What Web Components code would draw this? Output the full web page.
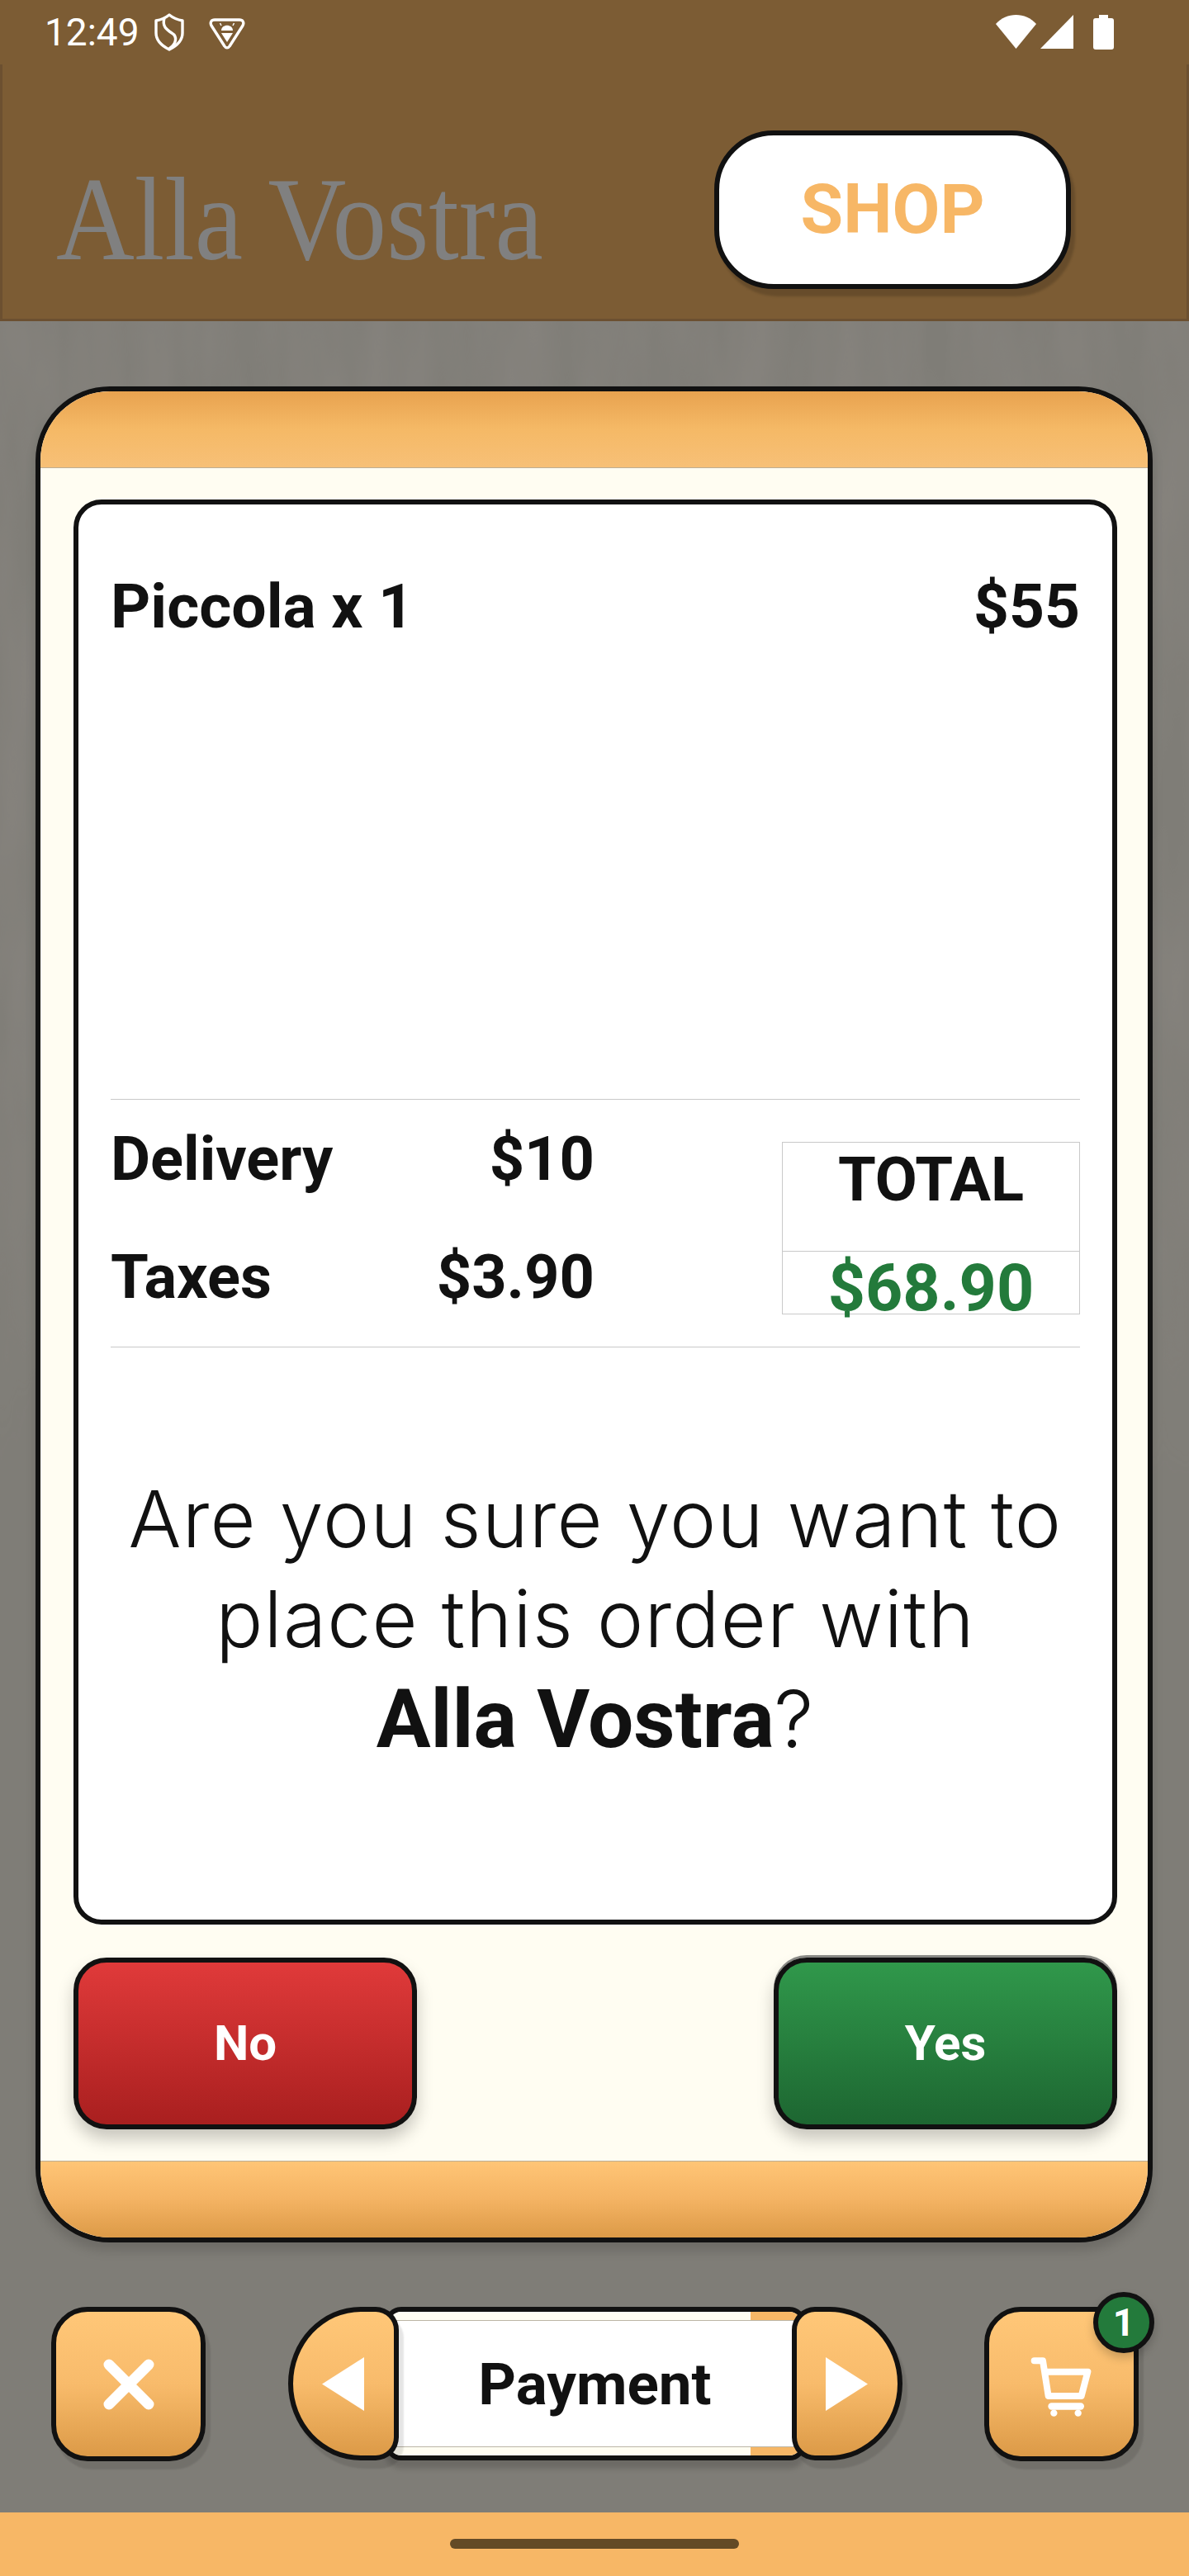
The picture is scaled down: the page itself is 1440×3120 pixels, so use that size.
<!DOCTYPE html>
<html>
<head>
<meta charset="utf-8">
<title>Alla Vostra</title>
<style>
  html, body { margin: 0; padding: 0; }
  body { width: 1440px; height: 3120px; overflow: hidden; font-family: Roboto, "Liberation Sans", sans-serif; color: #111; background: #7f7d77; }
  strong { font-weight: 700; font-family: Roboto, sans-serif; font-size: 98px; letter-spacing: 0; }
</style>
</head>
<body>
<app-shell>
  <status-bar slot="top">12:49</status-bar>
  <brand-header slot="top">
    <span slot="logo">Alla Vostra</span>
    <shop-button slot="action">SHOP</shop-button>
  </brand-header>

  <order-card>
    <receipt-panel>
      <item-row slot="items" label="Piccola x 1" value="$55"></item-row>
      <item-row slot="charges" label="Delivery" value="$10" style="--size:74px;--lh:143px"></item-row>
      <item-row slot="charges" label="Taxes" value="$3.90" style="--size:74px;--lh:143px"></item-row>
      <total-box slot="total"><span slot="head">TOTAL</span>$68.90</total-box>
      Are you sure you want to<br>place this order with<br><strong>Alla Vostra</strong>?
    </receipt-panel>
    <action-row>
      <action-button tone="red">No</action-button>
      <action-button tone="green">Yes</action-button>
    </action-row>
  </order-card>

  <step-nav>
    <icon-button icon="close"></icon-button>
    <step-pager>Payment</step-pager>
    <icon-button icon="cart" badge="1"></icon-button>
  </step-nav>

  <gesture-bar slot="bottom"></gesture-bar>
</app-shell>

<script>
const INK = "#111";

class StatusBar extends HTMLElement {
  constructor() {
    super();
    this.attachShadow({ mode: "open" }).innerHTML = `<style>
      :host { display: flex; align-items: flex-start; height: 78px; background: #7c5c34; color: #fff; padding: 0 91px 0 54px; box-sizing: border-box; }
      .time { font: 400 46px/46px Roboto, sans-serif; margin-top: 16px; width: 132px; }
      svg { display: block; flex: none; }
      .spacer { flex: 1; }
    </style>
    <span class="time"><slot></slot></span>
    <svg width="38" height="46" viewBox="0 0 38 46" style="margin-top:16px" fill="none" stroke="#fff" stroke-width="3.4" stroke-linejoin="round">
      <path d="M19 2 C24 6 29 8 35 9 V24 C35 33 27 40 19 44 C11 40 3 33 3 24 V9 C9 8 14 6 19 2 Z"/>
      <path d="M13 6 C10 16 16 20 22 24 C29 28 28 37 19 43"/>
    </svg>
    <svg width="44" height="40" viewBox="0 0 44 40" style="margin-top:20px;margin-left:29px" fill="none">
      <path d="M7 4 H37 C41 4 43 7 41 11 L25 36 C23.500 38.500 20.500 38.500 19 36 L3 11 C1 7 3 4 7 4 Z" stroke="#fff" stroke-width="3.4" stroke-linejoin="round"/>
      <path d="M15 17 C15 8.500 29 8.500 29 17 Z" fill="#fff"/>
      <path d="M15 11 L13.500 8 M29 11 L30.500 8" stroke="#fff" stroke-width="1.500"/>
      <path d="M15 20 H29 L22 31 Z" fill="#fff"/>
    </svg>
    <span class="spacer"></span>
    <svg width="49" height="41" viewBox="0 0 49 41" style="margin-top:18px"><path d="M0 11 C13 -3.600 36 -3.600 49 11 L24.500 41 Z" fill="#fff"/></svg>
    <svg width="40" height="41" viewBox="0 0 40 41" style="margin-top:18px;margin-left:5px"><path d="M40 0 V41 H0 Z" fill="#fff"/></svg>
    <svg width="25" height="42" viewBox="0 0 25 42" style="margin-top:18px;margin-left:24px"><path d="M7 0 H18 V4 H22 C24 4 25 5 25 7 V39 C25 41 24 42 22 42 H3 C1 42 0 41 0 39 V7 C0 5 1 4 3 4 H7 Z" fill="#fff"/></svg>`;
  }
}

class BrandHeader extends HTMLElement {
  constructor() {
    super();
    this.attachShadow({ mode: "open" }).innerHTML = `<style>
      :host { display: flex; justify-content: space-between; height: 311px; box-sizing: border-box; background: #7c5c34; border: solid #6c5030; border-width: 0 3px 3px 3px; padding: 80px 140px 0 65px; }
      .logo { font: 400 144px/144px "Liberation Serif", serif; color: #808080; margin-top: 36px; transform: scaleX(0.912); transform-origin: left center; white-space: nowrap; }
    </style>
    <span class="logo"><slot name="logo"></slot></span>
    <slot name="action"></slot>`;
  }
}

class ShopButton extends HTMLElement {
  constructor() {
    super();
    this.attachShadow({ mode: "open" }).innerHTML = `<style>
      :host { display: flex; align-items: center; justify-content: center; width: 432px; height: 192px; box-sizing: border-box; background: #fff; border: 6px solid ${INK}; border-radius: 72px; box-shadow: 5px 9px 3px rgba(0,0,0,.17); color: #f7b766; font: 700 84px/1 Roboto, sans-serif; }
    </style><slot></slot>`;
  }
}

class OrderCard extends HTMLElement {
  constructor() {
    super();
    this.attachShadow({ mode: "open" }).innerHTML = `<style>
      :host { display: flex; flex-direction: column; width: 1353px; height: 2248px; box-sizing: border-box; margin: 79px 0 0 43px; border: 6px solid ${INK}; border-radius: 90px; overflow: hidden; background: #fffdf2; box-shadow: 0 10px 14px rgba(0,0,0,.14); }
      .top { height: 92px; flex: none; background: linear-gradient(#e8a24f, #f5b966 50%, #f7c077); border-bottom: 1px solid #bcae94; }
      .body { flex: 1; display: flex; flex-direction: column; gap: 40px; padding: 38px 37px 0 40px; }
      .bottom { height: 92px; flex: none; background: linear-gradient(#ffc576, #f4b363 50%, #dc9a47); border-top: 1px solid #bcae94; }
    </style>
    <div class="top"></div>
    <div class="body"><slot></slot></div>
    <div class="bottom"></div>`;
  }
}

class ReceiptPanel extends HTMLElement {
  constructor() {
    super();
    this.attachShadow({ mode: "open" }).innerHTML = `<style>
      :host { display: flex; flex-direction: column; height: 1726px; box-sizing: border-box; background: #fff; border: 6px solid ${INK}; border-radius: 34px; padding: 0 39px; }
      .items { height: 721px; padding-top: 78px; box-sizing: border-box; border-bottom: 1px solid #c9c9c9; flex: none; }
      .summary { display: flex; justify-content: space-between; height: 299px; border-bottom: 1px solid #c9c9c9; flex: none; }
      .charges { width: 586px; }
      .message { text-align: center; font: 300 95px/121px Inter, "Liberation Sans", sans-serif; padding-top: 147px; letter-spacing: 1.2px; }
    </style>
    <div class="items"><slot name="items"></slot></div>
    <div class="summary">
      <div class="charges"><slot name="charges"></slot></div>
      <slot name="total"></slot>
    </div>
    <div class="message"><slot></slot></div>`;
  }
}

class ItemRow extends HTMLElement {
  constructor() {
    super();
    this.attachShadow({ mode: "open" }).innerHTML = `<style>
      :host { display: flex; justify-content: space-between; font: 700 var(--size, 75px)/var(--lh, 90px) Roboto, sans-serif; color: ${INK}; }
    </style><span>${this.getAttribute("label")}</span><span>${this.getAttribute("value")}</span>`;
  }
}

class TotalBox extends HTMLElement {
  constructor() {
    super();
    this.attachShadow({ mode: "open" }).innerHTML = `<style>
      :host { display: flex; flex-direction: column; align-self: flex-start; width: 361px; height: 209px; box-sizing: border-box; margin-top: 51px; border: 1px solid #c9c9c9; text-align: center; }
      .head { height: 131px; flex: none; border-bottom: 1px solid #c9c9c9; font: 700 74px/90px Roboto, sans-serif; color: ${INK}; }
      .amount { font: 700 79px/88px Roboto, sans-serif; color: #237a3b; }
    </style>
    <div class="head"><slot name="head"></slot></div>
    <div class="amount"><slot></slot></div>`;
  }
}

class ActionButton extends HTMLElement {
  constructor() {
    super();
    const tone = this.getAttribute("tone");
    const fill = tone === "green" ? "linear-gradient(#30984b, #1d6631)" : "linear-gradient(#e03a3a, #a91f1f)";
    const rim = tone === "green" ? ", 0 -3px 0 #8c8c88" : "";
    this.attachShadow({ mode: "open" }).innerHTML = `<style>
      :host { display: flex; align-items: center; justify-content: center; width: 416px; height: 208px; box-sizing: border-box; background: ${fill}; border: 6px solid ${INK}; border-radius: 40px; box-shadow: 0 12px 20px rgba(0,0,0,.22)${rim}; color: #fff; font: 700 60px/1 Roboto, sans-serif; }
    </style><slot></slot>`;
  }
}

class ActionRow extends HTMLElement {
  constructor() {
    super();
    this.attachShadow({ mode: "open" }).innerHTML = `<style>
      :host { display: flex; justify-content: space-between; }
    </style><slot></slot>`;
  }
}

const ICONS = {
  close: `<svg width="62" height="62" viewBox="0 0 62 62"><path d="M7 7 L55 55 M55 7 L7 55" stroke="#fff" stroke-width="13" stroke-linecap="round"/></svg>`,
  cart: `<svg width="77" height="73" viewBox="320 340 231 219" fill="none" style="margin-top:6px"><path d="M337 356 H368 L388 484 H508 L531 396 H375" stroke="#fff" stroke-width="24" stroke-linecap="round" stroke-linejoin="round"/><rect x="387" y="509" width="131" height="25" rx="12.500" fill="#fff"/><circle cx="408" cy="546" r="12.500" fill="#fff"/><circle cx="496" cy="546" r="12.500" fill="#fff"/></svg>`,
};
const ORANGE_FILL = "linear-gradient(#ffc778, #f8bb6b 50%, #dc9a47)";

class IconButton extends HTMLElement {
  constructor() {
    super();
    const badge = this.getAttribute("badge");
    this.attachShadow({ mode: "open" }).innerHTML = `<style>
      :host { display: flex; align-items: center; justify-content: center; position: relative; width: 187px; height: 187px; box-sizing: border-box; background: ${ORANGE_FILL}; border: 6px solid ${INK}; border-radius: 44px; box-shadow: 6px 10px 2px rgba(0,0,0,.1); }
      .badge { position: absolute; top: -24px; right: -25px; width: 74px; height: 74px; box-sizing: border-box; border: 6px solid ${INK}; border-radius: 50%; background: #237a3b; color: #fff; font: 700 46px/62px Roboto, sans-serif; text-align: center; box-shadow: 0 6px 12px rgba(0,0,0,.2); }
    </style>
    ${ICONS[this.getAttribute("icon")]}
    ${badge ? `<span class="badge">${badge}</span>` : ""}`;
  }
}

class StepPager extends HTMLElement {
  constructor() {
    super();
    this.attachShadow({ mode: "open" }).innerHTML = `<style>
      :host { display: flex; width: 744px; height: 186px; }
      .arrow { position: relative; z-index: 1; flex: none; display: flex; align-items: center; justify-content: center; width: 134px; height: 186px; box-sizing: border-box; background: ${ORANGE_FILL}; border: 6px solid ${INK}; box-shadow: 6px 10px 2px rgba(0,0,0,.1); }
      .prev { border-radius: 88px 28px 28px 88px / 93px 28px 28px 93px; }
      .next { border-radius: 28px 88px 88px 28px / 28px 93px 93px 28px; }
      .middle { flex: 1; margin: 0 -17px; display: flex; flex-direction: column; box-sizing: border-box; border: 6px solid ${INK}; border-radius: 20px; overflow: hidden; background: #fff; box-shadow: 0 10px 6px rgba(0,0,0,.15); }
      .edge { height: 10px; flex: none; background: linear-gradient(90deg, #fffdf2 0 437px, #f7b766 437px); }
      .edge.t { border-bottom: 1px solid #bcb6a6; }
      .edge.b { border-top: 1px solid #bcb6a6; }
      .label { flex: 1; display: flex; align-items: center; justify-content: center; font: 700 71px/1 Roboto, sans-serif; color: ${INK}; }
    </style>
    <div class="arrow prev"><svg width="51" height="65" viewBox="0 0 51 65"><path d="M51 0 V65 L0 32.500 Z" fill="#fff"/></svg></div>
    <div class="middle">
      <div class="edge t"></div>
      <div class="label"><slot></slot></div>
      <div class="edge b"></div>
    </div>
    <div class="arrow next"><svg width="51" height="65" viewBox="0 0 51 65"><path d="M0 0 V65 L51 32.500 Z" fill="#fff"/></svg></div>`;
  }
}

class StepNav extends HTMLElement {
  constructor() {
    super();
    this.attachShadow({ mode: "open" }).innerHTML = `<style>
      :host { display: flex; justify-content: space-between; align-items: flex-start; margin-top: 78px; padding: 0 61px 0 62px; }
    </style><slot></slot>`;
  }
}

class GestureBar extends HTMLElement {
  constructor() {
    super();
    this.attachShadow({ mode: "open" }).innerHTML = `<style>
      :host { display: flex; justify-content: center; height: 77px; padding-top: 32px; box-sizing: border-box; background: #f7b766; }
      i { display: block; width: 350px; height: 12px; border-radius: 6px; background: #634a26; }
    </style><i></i>`;
  }
}

class AppShell extends HTMLElement {
  constructor() {
    super();
    this.attachShadow({ mode: "open" }).innerHTML = `<style>
      :host { display: flex; flex-direction: column; height: 3120px; }
      .stage { position: relative; flex: 1; min-height: 0; }
      .content { position: relative; }
      .grain { position: absolute; left: 0; top: 0; width: 1440px; height: 1500px; opacity: .16; -webkit-mask-image: linear-gradient(#000 60%, transparent); mask-image: linear-gradient(#000 60%, transparent); }
    </style>
    <slot name="top"></slot>
    <div class="stage">
      <svg class="grain" aria-hidden="true">
        <filter id="wood"><feTurbulence type="fractalNoise" baseFrequency="0.018 0.004" numOctaves="3" seed="7"/><feColorMatrix values="0 0 0 0 .40  0 0 0 0 .35  0 0 0 0 .34  1.6 0 0 0 -.35"/></filter>
        <rect width="1440" height="1500" filter="url(#wood)"/>
      </svg>
      <div class="content"><slot></slot></div>
    </div>
    <slot name="bottom"></slot>`;
  }
}

customElements.define("status-bar", StatusBar);
customElements.define("brand-header", BrandHeader);
customElements.define("shop-button", ShopButton);
customElements.define("order-card", OrderCard);
customElements.define("receipt-panel", ReceiptPanel);
customElements.define("item-row", ItemRow);
customElements.define("total-box", TotalBox);
customElements.define("action-button", ActionButton);
customElements.define("action-row", ActionRow);
customElements.define("icon-button", IconButton);
customElements.define("step-pager", StepPager);
customElements.define("step-nav", StepNav);
customElements.define("gesture-bar", GestureBar);
customElements.define("app-shell", AppShell);
</script>
</body>
</html>
